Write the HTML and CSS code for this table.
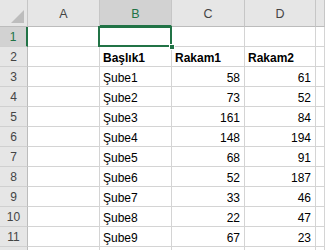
FILE: index.html
```html
<!DOCTYPE html>
<html>
<head>
    <title>Sheet1</title>
    <link rel="stylesheet" href="styles.css">
</head>
<body>
    <div class="sheet">
        <!-- column headers -->
        <div class="hd corner"><span class="tri"></span></div>
        <div class="hd col">A</div>
        <div class="hd col sel">B</div>
        <div class="hd col">C</div>
        <div class="hd col">D</div>
        <div class="hd col last"></div>

        <div class="hd row sel">1</div>
        <div class="c"></div>
        <div class="c active"><span class="handle"></span></div>
        <div class="c"></div>
        <div class="c"></div>
        <div class="c last"></div>

        <div class="hd row">2</div>
        <div class="c"></div>
        <div class="c b">Başlık1</div>
        <div class="c b">Rakam1</div>
        <div class="c b">Rakam2</div>
        <div class="c last"></div>

        <div class="hd row">3</div>
        <div class="c"></div>
        <div class="c">Şube1</div>
        <div class="c n">58</div>
        <div class="c n">61</div>
        <div class="c last"></div>

        <div class="hd row">4</div>
        <div class="c"></div>
        <div class="c">Şube2</div>
        <div class="c n">73</div>
        <div class="c n">52</div>
        <div class="c last"></div>

        <div class="hd row">5</div>
        <div class="c"></div>
        <div class="c">Şube3</div>
        <div class="c n">161</div>
        <div class="c n">84</div>
        <div class="c last"></div>

        <div class="hd row">6</div>
        <div class="c"></div>
        <div class="c">Şube4</div>
        <div class="c n">148</div>
        <div class="c n">194</div>
        <div class="c last"></div>

        <div class="hd row">7</div>
        <div class="c"></div>
        <div class="c">Şube5</div>
        <div class="c n">68</div>
        <div class="c n">91</div>
        <div class="c last"></div>

        <div class="hd row">8</div>
        <div class="c"></div>
        <div class="c">Şube6</div>
        <div class="c n">52</div>
        <div class="c n">187</div>
        <div class="c last"></div>

        <div class="hd row">9</div>
        <div class="c"></div>
        <div class="c">Şube7</div>
        <div class="c n">33</div>
        <div class="c n">46</div>
        <div class="c last"></div>

        <div class="hd row">10</div>
        <div class="c"></div>
        <div class="c">Şube8</div>
        <div class="c n">22</div>
        <div class="c n">47</div>
        <div class="c last"></div>

        <div class="hd row">11</div>
        <div class="c"></div>
        <div class="c">Şube9</div>
        <div class="c n">67</div>
        <div class="c n">23</div>
        <div class="c last"></div>

        <!-- top sliver of the next row -->
        <div class="hd row"></div>
        <div class="c"></div>
        <div class="c"></div>
        <div class="c"></div>
        <div class="c"></div>
        <div class="c last"></div>
    </div>
</body>
</html>
```

FILE: styles.css
```css
body {
    margin: 0;
    overflow: hidden;
    background: #fff;
    font-family: "Liberation Sans", Arial, sans-serif;
    font-size: 12px;
    color: #000;
}
* { box-sizing: border-box; }

.sheet {
    display: grid;
    grid-template-columns: 28px 72px 72px 73px 71px 1fr;
    grid-template-rows: 27px repeat(12, 20px);
    width: 325px;
    height: 250px;
    overflow: hidden;
}

/* headers */
.hd {
    background: #e6e6e6;
    color: #444;
    border-right: 1px solid #c6c6c6;
    border-bottom: 1px solid #bcbcbc;
    display: flex;
    align-items: center;
    justify-content: center;
}
.hd.col { padding-top: 2px; font-size: 12.5px; }
.hd.row {
    border-bottom-color: #d0d0d0;
    border-right-color: #bcbcbc;
    padding-top: 1px;
}
.hd.sel {
    background: #d2d2d2;
    color: #217346;
}
.hd.col.sel { border-bottom: 2px solid #217346; }
.hd.row.sel { border-right: 2px solid #217346; }
.corner { position: relative; }
.tri {
    position: absolute;
    right: 3px;
    bottom: 3px;
    width: 0;
    height: 0;
    border-left: 13px solid transparent;
    border-bottom: 13px solid #bdbdbd;
}

/* cells */
.c {
    border-right: 1px solid #d4d4d4;
    border-bottom: 1px solid #d4d4d4;
    padding: 2px 3px 0;
    display: flex;
    align-items: center;
    white-space: nowrap;
}
.c.b { font-weight: bold; }
.c.n { justify-content: flex-end; padding-right: 4px; }

.active { position: relative; }
.active::after {
    content: "";
    position: absolute;
    left: -2px;
    top: -1px;
    right: -1px;
    bottom: -1px;
    border: 2px solid #217346;
}
.handle {
    position: absolute;
    right: -4px;
    bottom: -4px;
    width: 6px;
    height: 6px;
    background: #217346;
    border: 1px solid #fff;
    z-index: 2;
}
```
